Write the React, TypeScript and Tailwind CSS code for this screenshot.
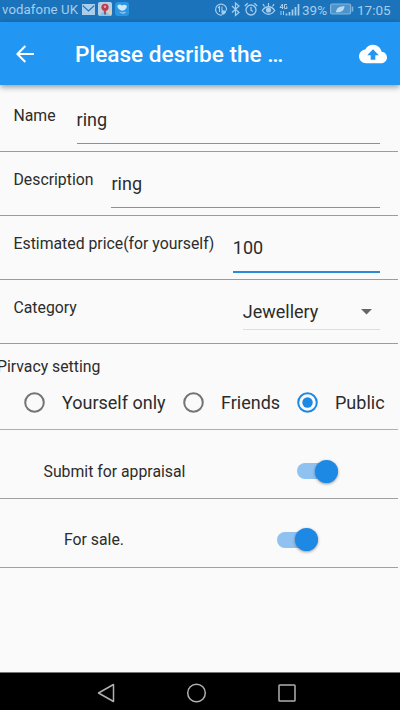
import type { ReactNode } from "react";

function StatusBar() {
  return (
    <div className="flex h-[22px] items-center bg-[#1b74bb] pl-[2px] text-[13.200px] leading-[22px] text-[#a6cdec]">
      <span className="w-[79px] shrink-0 whitespace-nowrap pb-[3px] tracking-[0.1px]">vodafone UK</span>
      <svg className="mb-[4px] ml-[1px] shrink-0" width="13" height="11" viewBox="0 0 13 11">
        <rect width="13" height="11" fill="#a9cdeb" />
        <path d="M.8 1.6 6.5 7l5.7-5.4" fill="none" stroke="#1b74bb" strokeWidth="1.2" />
      </svg>
      <svg className="mb-[4px] ml-[3px] shrink-0" width="14" height="14" viewBox="0 0 14 14">
        <rect width="14" height="14" rx="2" fill="#b9d0e2" />
        <path d="M1 14 5 9l3 1 5 4z" fill="#8fc0dc" />
        <path d="m9 10 4 3v-5z" fill="#d9d3b0" />
        <path d="M7 12.500V8" stroke="#7d3b55" strokeWidth="1.500" />
        <circle cx="7" cy="5.300" r="3.600" fill="#c03a4e" />
        <circle cx="7" cy="4.800" r="1.200" fill="#e3a2ad" />
      </svg>
      <svg className="mb-[4px] ml-[3px] shrink-0" width="14" height="14" viewBox="0 0 14 14">
        <rect width="14" height="14" rx="3" fill="#2b96e4" />
        <path d="M2.500 3.500c1.500-1.500 3.500-1 4.500 0 1.500-1 3.500-1.300 4.700.2.600 1.800-1 3.300-2.200 4.300-1.500 1-3 .8-4 .2C3.500 7 2 5.500 2.500 3.500z" fill="#cde8f8" />
        <path d="M4 9.500c2 1.300 4.500 1.300 7 .2-1 2.300-4.500 2.800-7-.2z" fill="#b5dbf3" />
      </svg>
      <div className="grow" />
      <svg className="mb-[4px] shrink-0" width="86" height="16" viewBox="0 0 86 16" fill="none" stroke="#a6cdec">
        <path d="M12.500 9.500A5.500 5.500 0 1 0 8 14" strokeWidth="1.200" />
        <path d="M5.500 11V5.500L4 7M8 5.500V11L9.500 9.500" strokeWidth="1.100" />
        <path d="M8 13.800c-1-2.500 1-4.500 4.200-4.300 0 2.500-1.400 4.300-4.200 4.300z" fill="#a6cdec" stroke="none" />
        <path d="m18 5 7 6.500-3.500 3V2l3.500 3-7 6.500" strokeWidth="1.200" />
        <circle cx="37" cy="9" r="5" strokeWidth="1.300" />
        <path d="M37 6v3.200l2 1.300M30.800 5l3-2.700M43.200 5l-3-2.700" strokeWidth="1.300" />
        <path d="M48.300 9.500c3.500-5 9-5 12.400 0-3.400 5-8.900 5-12.400 0z" strokeWidth="1.300" />
        <circle cx="54.500" cy="9" r="2.600" fill="#a6cdec" stroke="none" />
        <path d="M54.500 5V2M50.500 5.500 49 3.200M58.500 5.500 60 3.200" strokeWidth="1.200" />
        <path d="M68.500 8V3L66 6.500h3.500M73 3.500h-2.500v4H73V5.800h-1" strokeWidth="1" />
        <path d="M67 14v-4M69.500 14v-4" strokeWidth="1" />
        <path d="M72.500 14.500v-2M75.500 14.500V11M78.500 14.500V8.500M81.500 14.500V6M84.500 14.500V3" strokeWidth="1.700" />
      </svg>
      <span className="ml-[2px] w-[26px] shrink-0 pb-[3px] text-[13.500px]">39%</span>
      <svg className="mb-[4px] ml-[2px] shrink-0" width="24" height="12" viewBox="0 0 24 12">
        <rect x=".6" y="1" width="20" height="10" rx="1.500" fill="#4c94cd" stroke="#80b5df" strokeWidth="1.200" />
        <path d="M22.500 3.500v5" stroke="#80b5df" strokeWidth="1.500" />
        <path d="M6 9.300c.3-4 3-6 8.500-6C14 8 11 9.700 6 9.300z" fill="#b9d9f0" />
      </svg>
      <span className="ml-[3px] mr-[9px] w-[34px] shrink-0 pb-[3px] text-[13.500px]">17:05</span>
    </div>
  );
}

function AppBar() {
  return (
    <header className="z-10 flex h-[63px] items-center bg-[#2296f3] pt-px shadow-[0_2px_6px_rgba(0,0,0,0.4)]">
      <svg className="ml-[16px] shrink-0" width="18" height="18" viewBox="0 0 18 18" fill="none" stroke="#fff" strokeWidth="2.100">
        <path d="M18 9H1.800M9.300 1 1.400 9l7.900 8" />
      </svg>
      <h1 className="ml-[41px] grow whitespace-nowrap pt-px text-[22.600px] font-medium leading-7 text-white">Please desribe the …</h1>
      <svg className="mr-[13px] shrink-0" width="28" height="28" viewBox="0 0 24 24" fill="#fff">
        <path d="M19.350 10.040C18.670 6.590 15.640 4 12 4 9.110 4 6.600 5.640 5.350 8.040 2.340 8.360 0 10.910 0 14c0 3.310 2.690 6 6 6h13c2.760 0 5-2.240 5-5 0-2.640-2.050-4.780-4.650-4.960zM14 13v4h-4v-4H7l5-5 5 5h-3z" />
      </svg>
    </header>
  );
}

function FieldRow({ label, gap, children }: { label: string; gap: string; children: ReactNode }) {
  return (
    <div className="mr-[2px] flex h-16 border-b border-[#9c9c9c] pl-[13.500px] pr-[18px]">
      <label className="mt-[18px] whitespace-nowrap text-[15.800px] leading-5">{label}</label>
      <div className={`${gap} flex h-[57px] grow flex-col`}>{children}</div>
    </div>
  );
}

function TextValue({ value, active = false }: { value: string; active?: boolean }) {
  return (
    <div className={active ? "flex h-[57px] items-start border-b-2 border-[#2b8ad8] pt-[20px]" : "flex h-[56px] items-start border-b border-[#8f8f8f] pt-[20px]"}>
      <span className="text-[18px] leading-6">{value}</span>
    </div>
  );
}

function Radio({ checked = false }: { checked?: boolean }) {
  return (
    <svg className="shrink-0" width="21" height="21" viewBox="0 0 21 21">
      <circle cx="10.500" cy="10.500" r="9.300" fill="none" stroke={checked ? "#1e88e5" : "#747474"} strokeWidth="2" />
      {checked && <circle cx="10.500" cy="10.500" r="5.200" fill="#1e88e5" />}
    </svg>
  );
}

function Toggle() {
  return (
    <div className="flex h-[16px] w-[41px] items-center justify-end rounded-full bg-[#8fc2f1]">
      <div className="size-[23px] shrink-0 rounded-full bg-[#1e88e5] shadow-[0_1px_3px_rgba(0,0,0,0.4)]" />
    </div>
  );
}

export default function App() {
  return (
    <div className="flex h-[710px] w-[400px] flex-col overflow-hidden bg-[#fafafa] font-[Roboto,sans-serif] text-[#2c2c2c]">
      <StatusBar />
      <AppBar />
      <main className="flex grow flex-col pt-[3px]">
        <FieldRow label="Name" gap="ml-[21px]">
          <TextValue value="ring" />
        </FieldRow>
        <FieldRow label="Description" gap="ml-[18px]">
          <TextValue value="ring" />
        </FieldRow>
        <FieldRow label="Estimated price(for yourself)" gap="ml-[18.500px]">
          <TextValue value="100" active />
        </FieldRow>
        <FieldRow label="Category" gap="ml-[166px]">
          <div className="flex h-[50px] items-center justify-between border-b border-[#dedede] pr-[8px] pt-[14px]">
            <span className="text-[18px] leading-6">Jewellery</span>
            <svg width="11" height="6" viewBox="0 0 11 6" fill="#666">
              <path d="M0 0h11L5.500 5.500z" />
            </svg>
          </div>
        </FieldRow>
        <section className="mr-[2px] h-[86px] border-b border-[#b0b0b0]">
          <h2 className="-ml-[3px] pt-[13px] text-[15.800px] leading-5">Pirvacy setting</h2>
          <div className="mt-[14px] flex h-[22px] items-center pl-[24px] text-[18px]">
            <Radio />
            <span className="ml-[17px] w-[105px] whitespace-nowrap">Yourself only</span>
            <span className="ml-[16px] flex"><Radio /></span>
            <span className="ml-[17px] w-[60px] whitespace-nowrap">Friends</span>
            <span className="ml-[16px] flex"><Radio checked /></span>
            <span className="ml-[17px] whitespace-nowrap">Public</span>
          </div>
        </section>
        <div className="mr-[2px] flex h-[69px] items-center justify-between border-b border-[#a0a0a0] pl-[43.500px] pr-[60px] pt-[14px]">
          <span className="pt-px text-[15.800px] leading-5">Submit for appraisal</span>
          <Toggle />
        </div>
        <div className="mr-[2px] flex h-[69px] items-center justify-between border-b border-[#a0a0a0] pl-[64px] pr-[80px] pt-[13px]">
          <span className="pt-px text-[15.800px] leading-5">For sale.</span>
          <Toggle />
        </div>
      </main>
      <nav className="flex h-[38px] shrink-0 items-center border-t border-[#777] bg-black pl-[97px] pt-[3px]">
        <svg width="200" height="20" viewBox="0 0 200 20" fill="none" stroke="#b0b0b0" strokeWidth="1.500">
          <path d="M16.500 1.500v17L1.500 10z" strokeLinejoin="round" />
          <circle cx="99.500" cy="10" r="8.800" />
          <rect x="182" y="2" width="16" height="16" rx=".8" />
        </svg>
      </nav>
    </div>
  );
}
